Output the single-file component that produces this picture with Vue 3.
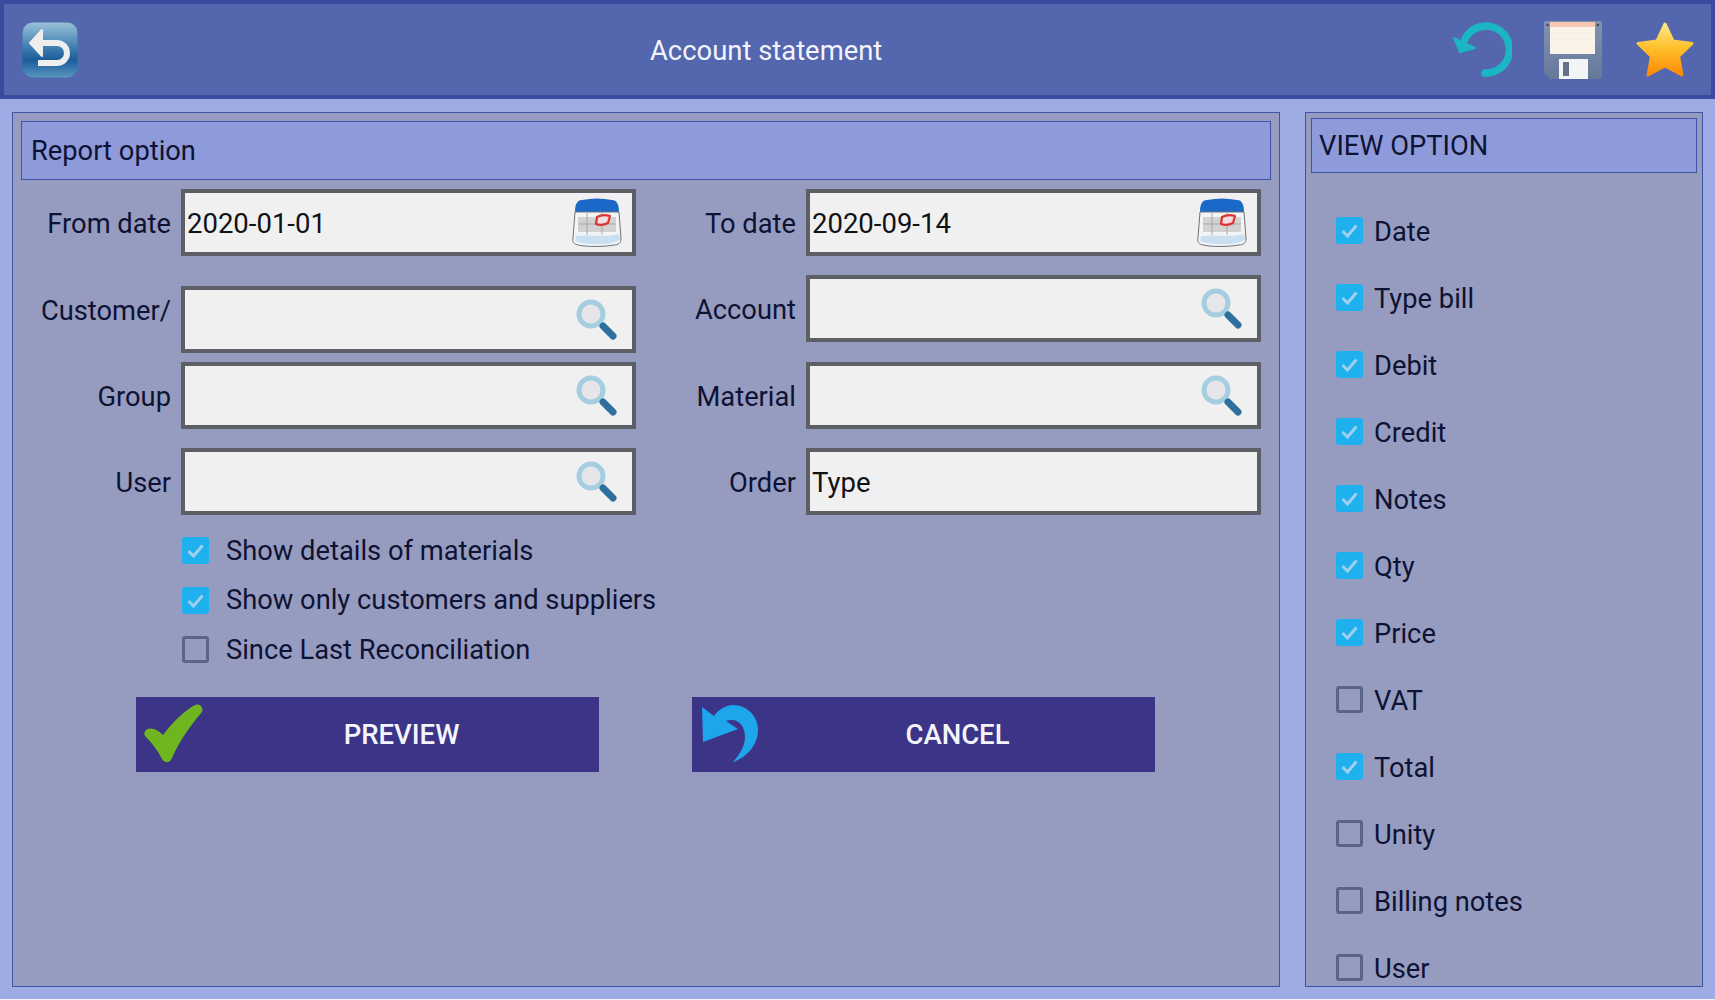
<script setup>
const leftFields = [
  { label: "From date", value: "2020-01-01", icon: "calendar", cls: "first" },
  { label: "Customer/", value: "", icon: "search", cls: "customer" },
  { label: "Group", value: "", icon: "search", cls: "group" },
  { label: "User", value: "", icon: "search", cls: "" },
];

const rightFields = [
  { label: "To date", value: "2020-09-14", icon: "calendar", cls: "first" },
  { label: "Account", value: "", icon: "search", cls: "" },
  { label: "Material", value: "", icon: "search", cls: "material" },
  { label: "Order", value: "Type", icon: "", cls: "" },
];

const reportChecks = [
  { label: "Show details of materials", checked: true },
  { label: "Show only customers and suppliers", checked: true },
  { label: "Since Last Reconciliation", checked: false },
];

const viewChecks = [
  { label: "Date", checked: true },
  { label: "Type bill", checked: true },
  { label: "Debit", checked: true },
  { label: "Credit", checked: true },
  { label: "Notes", checked: true },
  { label: "Qty", checked: true },
  { label: "Price", checked: true },
  { label: "VAT", checked: false },
  { label: "Total", checked: true },
  { label: "Unity", checked: false },
  { label: "Billing notes", checked: false },
  { label: "User", checked: false },
];
</script>

<template>
  <div class="screen">
    <header class="topbar">
      <svg class="back-icon" width="58" height="58" viewBox="0 0 58 58">
        <defs>
          <linearGradient id="backFill" x1="0" y1="0" x2="0" y2="1">
            <stop offset="0" stop-color="#9cc2d9" />
            <stop offset="0.45" stop-color="#3f7fb0" />
            <stop offset="0.68" stop-color="#1b5c9a" />
            <stop offset="1" stop-color="#5c97c2" />
          </linearGradient>
        </defs>
        <rect x="1" y="1" width="56" height="56" rx="11" fill="url(#backFill)" stroke="#4a6ea8" />
        <path d="M22 22 H36 a9.5 9.5 0 0 1 0 20 H17" fill="none" stroke="#eeeeee" stroke-width="6" stroke-linejoin="round" />
        <path d="M9 22 L21 9 V35 Z" fill="#eeeeee" stroke="#eeeeee" stroke-width="2" stroke-linejoin="round" />
      </svg>
      <div class="title">Account statement</div>
      <svg class="undo-icon" width="62" height="62" viewBox="0 0 62 62">
        <path d="M15 20 A23.5 23.5 0 1 1 35 54" fill="none" stroke="#1cb5c4" stroke-width="7.5" stroke-linecap="round" />
        <path d="M4 19 L10 33 L25 29 Z" fill="#1cb5c4" stroke="#1cb5c4" stroke-width="2" stroke-linejoin="round" />
      </svg>
      <svg class="save-icon" width="58" height="58" viewBox="0 0 58 58">
        <defs>
          <linearGradient id="saveBody" x1="0" y1="0" x2="0" y2="1">
            <stop offset="0" stop-color="#8093b0" />
            <stop offset="1" stop-color="#67799a" />
          </linearGradient>
        </defs>
        <path d="M2 0 H56 a2 2 0 0 1 2 2 V56 a2 2 0 0 1 -2 2 H6 L0 52 V2 a2 2 0 0 1 2 -2 Z" fill="url(#saveBody)" />
        <rect x="6" y="1" width="45" height="32" fill="#fbf3ea" />
        <rect x="6" y="1" width="45" height="5" fill="#f6c8b4" />
        <path d="M6 12 H51 M6 18 H51 M6 24 H51" stroke="#f7ece4" stroke-width="1" />
        <circle cx="3.5" cy="4" r="1.2" fill="#3e4a60" />
        <circle cx="54" cy="4" r="1.2" fill="#3e4a60" />
        <rect x="15" y="38" width="29" height="20" fill="#f2f4f6" />
        <rect x="19" y="41" width="6" height="14" fill="#62728c" />
      </svg>
      <svg class="star-icon" width="60" height="58" viewBox="0 0 60 58">
        <defs>
          <linearGradient id="starFill" x1="0" y1="0" x2="0" y2="1">
            <stop offset="0" stop-color="#ffe88a" />
            <stop offset="0.45" stop-color="#ffc22e" />
            <stop offset="1" stop-color="#ff8a05" />
          </linearGradient>
        </defs>
        <path d="M30 3 L38 20 L57 22.5 L43.5 35.5 L47 54 L30 45 L13 54 L16.5 35.5 L3 22.5 L22 20 Z" fill="url(#starFill)" stroke="url(#starFill)" stroke-width="3" stroke-linejoin="round" />
      </svg>
    </header>

    <main class="content">
      <section class="panel report">
        <div class="panel-title report-title">Report option</div>

        <div class="form-columns">
          <div class="form-col left">
            <div v-for="f in leftFields" :key="f.label" class="form-row" :class="f.cls">
              <label class="field-label">{{ f.label }}</label>
              <div class="field">
                <span>{{ f.value }}</span>
                <svg v-if="f.icon === 'calendar'" class="cal" width="50" height="50" viewBox="0 0 50 50">
                  <path d="M3 14 C3 5 6 2 10 2 C20 0 30 0 40 2 C44 2 47 5 47 14 Z" fill="#1c68c8" />
                  <path d="M3 14 H47 L49 41 C49 45 46 47 42 47 C30 49 16 49 6 47 C2 46 0 44 1 40 Z" fill="#f2f4f6" stroke="#6f7378" stroke-width="1" />
                  <path d="M6 19 H44 V34 H6 Z" fill="#d2d2d2" />
                  <path d="M6 26 H44 M15 15 V37 M30 15 V37" stroke="#a9a9a9" stroke-width="1" />
                  <path d="M25 19 Q31 16 38 18 L36 25 Q30 28 24 26 Z" fill="#f2dede" stroke="#dc3232" stroke-width="2.2" stroke-linejoin="round" />
                  <path d="M4 38 C16 36 32 40 47 36 L48 42 C36 48 14 47 3 43 Z" fill="#c9dff2" />
                </svg>
                <svg v-else-if="f.icon === 'search'" class="lens" width="50" height="50" viewBox="0 0 50 50">
                  <circle cx="19" cy="19" r="12" fill="#e6e6ea" stroke="#a5cfe0" stroke-width="5" />
                  <path d="M28 28 L31 31" stroke="#a5cfe0" stroke-width="4" />
                  <path d="M31 31 L41 41" stroke="#2e6f9e" stroke-width="7" stroke-linecap="round" />
                </svg>
              </div>
            </div>
          </div>

          <div class="form-col right">
            <div v-for="f in rightFields" :key="f.label" class="form-row" :class="f.cls">
              <label class="field-label">{{ f.label }}</label>
              <div class="field">
                <span>{{ f.value }}</span>
                <svg v-if="f.icon === 'calendar'" class="cal" width="50" height="50" viewBox="0 0 50 50">
                  <path d="M3 14 C3 5 6 2 10 2 C20 0 30 0 40 2 C44 2 47 5 47 14 Z" fill="#1c68c8" />
                  <path d="M3 14 H47 L49 41 C49 45 46 47 42 47 C30 49 16 49 6 47 C2 46 0 44 1 40 Z" fill="#f2f4f6" stroke="#6f7378" stroke-width="1" />
                  <path d="M6 19 H44 V34 H6 Z" fill="#d2d2d2" />
                  <path d="M6 26 H44 M15 15 V37 M30 15 V37" stroke="#a9a9a9" stroke-width="1" />
                  <path d="M25 19 Q31 16 38 18 L36 25 Q30 28 24 26 Z" fill="#f2dede" stroke="#dc3232" stroke-width="2.2" stroke-linejoin="round" />
                  <path d="M4 38 C16 36 32 40 47 36 L48 42 C36 48 14 47 3 43 Z" fill="#c9dff2" />
                </svg>
                <svg v-else-if="f.icon === 'search'" class="lens" width="50" height="50" viewBox="0 0 50 50">
                  <circle cx="19" cy="19" r="12" fill="#e6e6ea" stroke="#a5cfe0" stroke-width="5" />
                  <path d="M28 28 L31 31" stroke="#a5cfe0" stroke-width="4" />
                  <path d="M31 31 L41 41" stroke="#2e6f9e" stroke-width="7" stroke-linecap="round" />
                </svg>
              </div>
            </div>
          </div>
        </div>

        <div class="report-checks">
          <div v-for="c in reportChecks" :key="c.label" class="check-row">
            <span class="box" :class="{ on: c.checked }">
              <svg v-if="c.checked" width="27" height="27" viewBox="0 0 27 27">
                <path d="M6.5 14 L11.5 19 L20.5 8.5" fill="none" stroke="#9fd0ee" stroke-width="3" />
              </svg>
            </span>
            <span>{{ c.label }}</span>
          </div>
        </div>

        <div class="actions">
          <button class="action">
            <svg class="action-icon" width="60" height="60" viewBox="0 0 60 60">
              <path d="M1 27 C3 24 7 24 10 25 C13 26 16 28 19 31 C28 19 40 7 51 1 C55 -1 60 3 58 8 C46 22 35 38 28 54 C26 59 21 60 18 55 C14 47 8 39 2 33 C0 31 0 29 1 27 Z" fill="#6fb51f" />
            </svg>
            <span class="action-text">PREVIEW</span>
          </button>
          <button class="action">
            <svg class="action-icon" width="60" height="60" viewBox="0 0 60 60">
              <path d="M2 3 L14 12 C19 5 26 1 33 1 C47 1 58 12 58 26 C58 41 46 54 33 58 C40 50 45 42 45 33 C45 23 40 17 33 16 C30 16 28 16 26 17 L38 25 L3 38 Z" fill="#1ea6ec" />
            </svg>
            <span class="action-text">CANCEL</span>
          </button>
        </div>
      </section>

      <aside class="panel view">
        <div class="panel-title view-title">VIEW OPTION</div>
        <div class="view-list">
          <div v-for="c in viewChecks" :key="c.label" class="check-row view-row">
            <span class="box" :class="{ on: c.checked }">
              <svg v-if="c.checked" width="27" height="27" viewBox="0 0 27 27">
                <path d="M6.5 14 L11.5 19 L20.5 8.5" fill="none" stroke="#9fd0ee" stroke-width="3" />
              </svg>
            </span>
            <span>{{ c.label }}</span>
          </div>
        </div>
      </aside>
    </main>
  </div>
</template>

<style>
html,
body {
  margin: 0;
  background: #f4f5fa;
}
</style>

<style scoped>
.screen {
  width: 1715px;
  height: 999px;
  background: #9eace3;
  display: flex;
  flex-direction: column;
  font-family: Roboto, "Liberation Sans", sans-serif;
  color: #0e1233;
  overflow: hidden;
}

.topbar {
  position: relative;
  height: 91px;
  flex: none;
  border: 4px solid #3b4a9f;
  background: #5466ae;
  display: flex;
  align-items: center;
}

.back-icon {
  margin-left: 17px;
}

.title {
  position: absolute;
  left: 646px;
  top: 31px;
  font-size: 27.4px;
  line-height: 32px;
  color: #f2f4fb;
}

.undo-icon {
  margin-left: auto;
}

.save-icon {
  margin-left: 32px;
}

.star-icon {
  margin-left: 33px;
  margin-right: 16px;
}

.content {
  flex: 1;
  min-height: 0;
  display: flex;
  padding: 13px 12px 11px 12px;
  gap: 25px;
}

.panel {
  box-sizing: border-box;
  height: 875px;
  border: 1.5px solid #3f53a8;
  background: #969cc0;
  overflow: hidden;
}

.report {
  width: 1268px;
  padding: 8px;
}

.view {
  width: 398px;
  padding: 5px;
}

.panel-title {
  box-sizing: border-box;
  border: 1.5px solid #3f53a8;
  background: #8e9ada;
  font-size: 27.3px;
  display: flex;
  align-items: center;
}

.report-title {
  height: 59px;
  padding-left: 9px;
}

.view-title {
  height: 55px;
  padding-left: 7px;
}

.form-columns {
  display: flex;
  gap: 20px;
  margin-top: 9px;
}

.form-col.left {
  width: 615px;
}

.form-col.right {
  width: 605px;
}

.form-row {
  display: flex;
  align-items: center;
  gap: 10px;
  height: 67px;
  margin-top: 19px;
}

.form-row.first {
  margin-top: 0;
}

.form-row.customer {
  margin-top: 30px;
}

.form-row.group {
  margin-top: 9px;
}

.form-row.material {
  margin-top: 20px;
}

.field-label {
  flex: 1;
  padding-top: 2px;
  text-align: right;
  font-size: 27.3px;
  white-space: nowrap;
}

.customer .field-label {
  position: relative;
  top: -10px;
}

.field {
  box-sizing: border-box;
  width: 455px;
  height: 67px;
  flex: none;
  border: 4px solid #5c5f66;
  background: #f0f0f0;
  display: flex;
  align-items: center;
  justify-content: space-between;
  padding-left: 2px;
  font-size: 27.5px;
  color: #101216;
}

.field span {
  padding-top: 2px;
}

.cal {
  margin-right: 10px;
}

.lens {
  margin-right: 10px;
}

.report-checks {
  margin: 11px 0 0 161px;
}

.check-row {
  display: flex;
  align-items: center;
  gap: 17px;
  height: 49.5px;
  font-size: 27.3px;
}

.box {
  box-sizing: border-box;
  width: 27px;
  height: 27px;
  flex: none;
  border: 3.5px solid #5b6387;
  border-radius: 3px;
}

.box.on {
  border: none;
  background: #1fb0ee;
}

.actions {
  display: flex;
  gap: 93px;
  margin: 22px 0 0 115px;
}

.action {
  width: 463px;
  height: 75px;
  padding: 0;
  border: none;
  background: #3b3487;
  color: #f4f5fb;
  display: flex;
  align-items: center;
  font-family: inherit;
  font-size: 27.5px;
  font-weight: 500;
}

.action-icon {
  flex: none;
  margin-left: 8px;
}

.action-text {
  flex: 1;
  text-align: center;
}

.view-list {
  margin: 25px 0 0 25px;
}

.view-row {
  height: 67px;
  gap: 11px;
}

.view-row .box {
  margin-bottom: 2px;
}
</style>
